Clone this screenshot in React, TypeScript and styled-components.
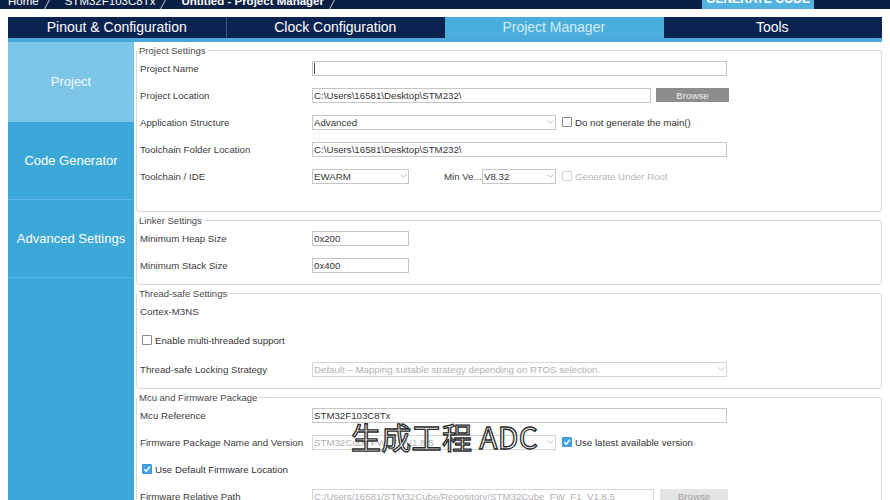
import styled, { createGlobalStyle } from 'styled-components'

const GlobalStyle = createGlobalStyle`
  html, body {
    margin: 0;
    padding: 0;
    background: #fff;
  }
  body {
    font-family: "Liberation Sans", Arial, sans-serif;
  }
  * {
    box-sizing: border-box;
  }
`;

const Page = styled.div`
  position: relative;
  width: 890px;
  height: 500px;
  overflow: hidden;
  background: #fff;
`;

const Header = styled.div`
  height: 9px;
  background: #0a1f45;
  display: flex;
  align-items: flex-end;
  overflow: hidden;
  padding: 0 76px 0 8px;
`;

const Crumb = styled.span<{ $current?: boolean }>`
  font-size: 11.5px;
  line-height: 14px;
  margin-bottom: 1.5px;
  color: #fff;
  font-weight: ${p => (p.$current ? 700 : 400)};
  white-space: nowrap;
`;

const CrumbSep = styled.span`
  display: inline-block;
  width: 1px;
  height: 13px;
  margin: 0 17px -1px 8px;
  background: #aeb9cb;
  transform: rotate(28deg);
`;

const GenerateButton = styled.div`
  margin-left: auto;
  width: 112px;
  height: 9px;
  background: #52b3de;
  display: flex;
  align-items: flex-end;
  justify-content: center;
  overflow: hidden;
  color: #fff;
  font-weight: 700;
  font-size: 12px;
  line-height: 14px;
  span {
    margin-bottom: 3px;
  }
`;

const TabBar = styled.div`
  margin: 8px 8px 0;
  display: grid;
  grid-template-columns: repeat(4, 1fr);
  background: #0a2350;
  border-bottom: 4px solid #4aa9d9;
`;

const Tab = styled.div<{ $active?: boolean; $divider?: boolean }>`
  height: 21px;
  line-height: 21px;
  text-align: center;
  font-size: 14px;
  color: ${p => (p.$active ? '#d3ebf7' : '#fff')};
  background: ${p => (p.$active ? '#4aaedb' : 'transparent')};
  border-right: 1px solid ${p => (p.$divider ? '#3a5884' : 'transparent')};
`;

const Body = styled.div`
  display: flex;
  margin: 0 8px;
  height: 458px;
`;

const Sidebar = styled.div`
  width: 126px;
  flex: none;
  background: #3ba8d7;
  display: flex;
  flex-direction: column;
`;

const SideItem = styled.div<{ $active?: boolean }>`
  height: 78px;
  display: flex;
  align-items: center;
  justify-content: center;
  font-size: 13px;
  color: ${p => (p.$active ? '#f2fafe' : '#fff')};
  background: ${p => (p.$active ? '#7cc5e7' : '#3ba8d7')};
  border-bottom: 1px solid ${p => (p.$active ? '#7cc5e7' : '#5cb8e1')};
  &:first-child {
    height: 80px;
  }
`;

const Content = styled.div`
  flex: 1;
  padding: 3px 0 0 2px;
  display: flex;
  flex-direction: column;
  gap: 3px;
`;

const Panel = styled.fieldset<{ $gap?: number; $bottom: number }>`
  margin: 0;
  min-width: 0;
  border: 1px solid #d8d8d8;
  border-radius: 3px;
  padding: 0 0 ${p => p.$bottom}px 3px;
  display: flex;
  flex-direction: column;
  gap: ${p => p.$gap ?? 3}px;
`;

const Legend = styled.legend`
  font-size: 9.5px;
  line-height: 11px;
  color: #4a4a4a;
  padding: 0 2px 0 1px;
  margin-left: -2px;
`;

const Row = styled.div`
  height: 24px;
  display: flex;
  align-items: center;
`;

const Label = styled.div`
  width: 172px;
  flex: none;
  font-size: 9.7px;
  color: #3c3c3c;
  white-space: nowrap;
`;

const Field = styled.div<{ $w: number; $disabled?: boolean }>`
  width: ${p => p.$w}px;
  height: 15px;
  flex: none;
  display: flex;
  align-items: center;
  padding: 0 1px;
  border: 1px solid ${p => (p.$disabled ? '#d6d6d6' : '#c6c6c6')};
  background: #fff;
  font-size: 9.7px;
  color: ${p => (p.$disabled ? '#b2b2b2' : '#363636')};
  white-space: nowrap;
  overflow: hidden;
`;

const FieldText = styled.span`
  flex: 1;
  overflow: hidden;
`;

const Caret = styled.span`
  width: 1px;
  height: 11px;
  background: #444;
`;

const Browse = styled.div<{ $w: number; $disabled?: boolean }>`
  width: ${p => p.$w}px;
  height: 14px;
  margin-left: ${p => (p.$disabled ? 6 : 5)}px;
  display: flex;
  align-items: center;
  justify-content: center;
  font-size: 9.7px;
  background: ${p => (p.$disabled ? '#e4e4e4' : '#8d8d8d')};
  color: ${p => (p.$disabled ? '#a0a0a0' : '#eeeeee')};
`;

const CheckWrap = styled.div<{ $disabled?: boolean; $indent?: number }>`
  display: flex;
  align-items: center;
  gap: 3px;
  margin-left: ${p => p.$indent ?? 6}px;
  font-size: 9.7px;
  color: ${p => (p.$disabled ? '#b8b8b8' : '#333')};
  white-space: nowrap;
`;

const Box = styled.span<{ $checked?: boolean; $disabled?: boolean }>`
  width: 10px;
  height: 10px;
  display: flex;
  align-items: center;
  justify-content: center;
  border: 1px solid ${p => (p.$checked ? '#3a98d8' : p.$disabled ? '#d2d2d2' : '#8a8a8a')};
  background: ${p => (p.$checked ? '#45a3e0' : '#fff')};
  border-radius: 1px;
`;

const MinLabel = styled.div`
  width: 38px;
  margin-left: 35px;
  font-size: 9.7px;
  color: #3c3c3c;
  white-space: nowrap;
`;

const Plain = styled.div`
  font-size: 9.7px;
  color: #3c3c3c;
`;

const Subtitle = styled.div`
  position: absolute;
  left: 351px;
  top: 414px;
  font-family: "Noto Sans CJK SC", "Liberation Sans", sans-serif;
  font-size: 30px;
  font-weight: 400;
  color: #fff;
  -webkit-text-stroke: 1.3px #2b2b2b;
  letter-spacing: 0.3px;
  white-space: nowrap;
`;

const Chevron = () => (
  <svg width="7" height="4" viewBox="0 0 7 4">
    <path d="M0.5 0.5 L3.5 3.2 L6.5 0.5" fill="none" stroke="#b5b5b5" strokeWidth="0.9" />
  </svg>
);

const Tick = () => (
  <svg width="8" height="8" viewBox="0 0 8 8">
    <path d="M1.2 4.2 L3.2 6.1 L6.9 1.6" fill="none" stroke="#fff" strokeWidth="1.4" />
  </svg>
);

const Select = ({ w, value, disabled }: { w: number; value: string; disabled?: boolean }) => (
  <Field $w={w} $disabled={disabled}>
    <FieldText>{value}</FieldText>
    <Chevron />
  </Field>
);

const Check = ({ label, checked, disabled, indent }: { label: string; checked?: boolean; disabled?: boolean; indent?: number }) => (
  <CheckWrap $disabled={disabled} $indent={indent}>
    <Box $checked={checked} $disabled={disabled}>{checked && <Tick />}</Box>
    {label}
  </CheckWrap>
);

export default function App() {
  return (
    <Page>
      <GlobalStyle />
      <Header>
        <Crumb>Home</Crumb>
        <CrumbSep />
        <Crumb>STM32F103C8Tx</Crumb>
        <CrumbSep />
        <Crumb $current>Untitled - Project Manager</Crumb>
        <CrumbSep />
        <GenerateButton><span>GENERATE CODE</span></GenerateButton>
      </Header>

      <TabBar>
        <Tab $divider>Pinout &amp; Configuration</Tab>
        <Tab>Clock Configuration</Tab>
        <Tab $active>Project Manager</Tab>
        <Tab>Tools</Tab>
      </TabBar>

      <Body>
        <Sidebar>
          <SideItem $active>Project</SideItem>
          <SideItem>Code Generator</SideItem>
          <SideItem>Advanced Settings</SideItem>
        </Sidebar>

        <Content>
          <Panel $bottom={23}>
            <Legend>Project Settings</Legend>
            <Row>
              <Label>Project Name</Label>
              <Field $w={415}><Caret /></Field>
            </Row>
            <Row>
              <Label>Project Location</Label>
              <Field $w={339}>C:\Users\16581\Desktop\STM232\</Field>
              <Browse $w={73}>Browse</Browse>
            </Row>
            <Row>
              <Label>Application Structure</Label>
              <Select w={244} value="Advanced" />
              <Check label="Do not generate the main()" />
            </Row>
            <Row>
              <Label>Toolchain Folder Location</Label>
              <Field $w={415}>C:\Users\16581\Desktop\STM232\</Field>
            </Row>
            <Row>
              <Label>Toolchain / IDE</Label>
              <Select w={97} value="EWARM" />
              <MinLabel>Min Ve...</MinLabel>
              <Select w={74} value="V8.32" />
              <Check label="Generate Under Root" disabled />
            </Row>
          </Panel>

          <Panel $bottom={7}>
            <Legend>Linker Settings</Legend>
            <Row>
              <Label>Minimum Heap Size</Label>
              <Field $w={97}>0x200</Field>
            </Row>
            <Row>
              <Label>Minimum Stack Size</Label>
              <Field $w={97}>0x400</Field>
            </Row>
          </Panel>

          <Panel $bottom={7} $gap={5}>
            <Legend>Thread-safe Settings</Legend>
            <Row>
              <Plain>Cortex-M3NS</Plain>
            </Row>
            <Row>
              <Check label="Enable multi-threaded support" indent={2} />
            </Row>
            <Row>
              <Label>Thread-safe Locking Strategy</Label>
              <Select w={415} value="Default  –  Mapping suitable strategy depending on RTOS selection." disabled />
            </Row>
          </Panel>

          <Panel $bottom={60}>
            <Legend>Mcu and Firmware Package</Legend>
            <Row>
              <Label>Mcu Reference</Label>
              <Field $w={415}>STM32F103C8Tx</Field>
            </Row>
            <Row>
              <Label>Firmware Package Name and Version</Label>
              <Select w={244} value="STM32Cube FW_F1 V1.8.5" disabled />
              <Check label="Use latest available version" checked />
            </Row>
            <Row>
              <Check label="Use Default Firmware Location" checked indent={2} />
            </Row>
            <Row>
              <Label>Firmware Relative Path</Label>
              <Field $w={342} $disabled>C:/Users/16581/STM32Cube/Repository/STM32Cube_FW_F1_V1.8.5</Field>
              <Browse $w={68} $disabled>Browse</Browse>
            </Row>
          </Panel>
        </Content>
      </Body>

      <Subtitle>生成工程 ADC</Subtitle>
    </Page>
  );
}
